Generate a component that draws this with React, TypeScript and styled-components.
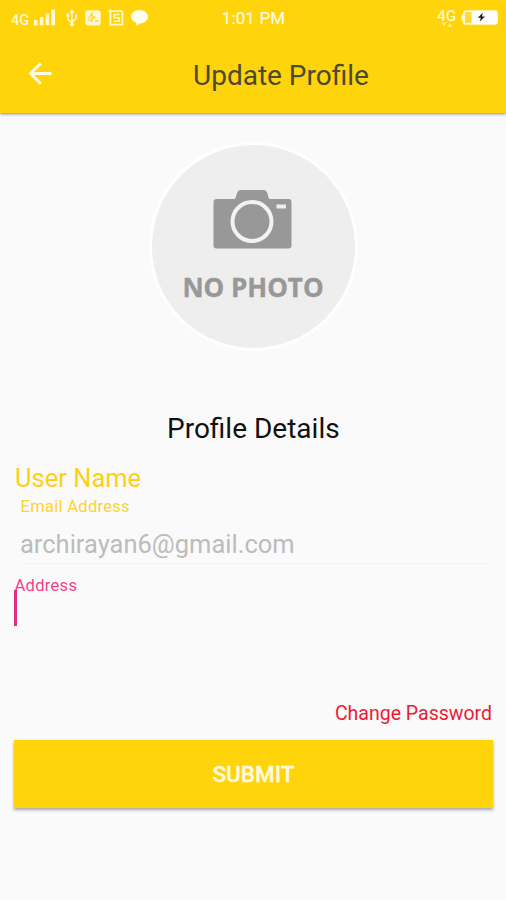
import React from "react";
import styled, { createGlobalStyle } from "styled-components";

const GlobalStyle = createGlobalStyle`
  *, *::before, *::after { box-sizing: border-box; }
  body { margin: 0; background: #fafafa; font-family: Roboto, sans-serif; }
`;

const Screen = styled.div`
  width: 506px;
  height: 900px;
  display: flex;
  flex-direction: column;
  background: #fafafa;
  overflow: hidden;
`;

const Header = styled.header`
  height: 113px;
  flex: none;
  background: #ffd40b;
  box-shadow: 0 1px 3px rgba(60, 50, 80, 0.6);
`;

const StatusBar = styled.div`
  height: 36px;
  display: grid;
  grid-template-columns: 1fr auto 1fr;
  align-items: center;
  padding: 0 7px 0 11px;
  color: #fffbe0;
`;

const StatusIcons = styled.div`
  display: flex;
  align-items: center;
`;

const StatusEnd = styled(StatusIcons)`
  justify-content: flex-end;
`;

const Clock = styled.time`
  margin-right: 3px;
  font-size: 17px;
  line-height: 20px;
  letter-spacing: 0.15px;
  -webkit-text-stroke: 0.2px #fffbe0;
`;

const Toolbar = styled.div`
  height: 77px;
  display: flex;
  align-items: flex-start;
  padding: 24px 0 0 28px;
`;

const BackButton = styled.button`
  width: 24px;
  height: 30px;
  padding: 0;
  border: 0;
  background: none;
`;

const Title = styled.h1`
  margin: 0 0 0 141px;
  font-size: 28px;
  line-height: 32px;
  font-weight: 400;
  color: #4b4a32;
`;

const Content = styled.main`
  display: flex;
  flex-direction: column;
  padding: 29px 13px 0 14px;
`;

const Avatar = styled.div`
  width: 209px;
  height: 209px;
  margin-left: 135px;
  border: 3px solid #fefefe;
  border-radius: 50%;
  background: #eeeeee;
  display: flex;
  flex-direction: column;
  align-items: center;
  padding: 44px 1px 0 0;
`;

const AvatarCaption = styled.span`
  margin-top: 20px;
  font-family: "Open Sans", sans-serif;
  font-size: 26px;
  line-height: 36px;
  font-weight: 700;
  color: #989898;
  -webkit-text-stroke: 0.4px #989898;
  white-space: nowrap;
`;

const SectionTitle = styled.h2`
  margin: 62px 0 0 153px;
  font-size: 28px;
  line-height: 32px;
  font-weight: 400;
  color: #111111;
`;

const FieldName = styled.div`
  margin: 18px 0 0 1px;
  font-size: 25.5px;
  line-height: 30px;
  color: #fdd017;
`;

const Field = styled.div<{ $inset?: number; $gap?: number }>`
  display: flex;
  flex-direction: column;
  align-items: flex-start;
  margin-top: ${(p) => p.$gap ?? 0}px;
  padding: 0 4px 0 ${(p) => p.$inset ?? 0}px;
`;

const Label = styled.label<{ $active?: boolean }>`
  padding-left: 0.5px;
  font-size: 16.5px;
  line-height: 20px;
  height: 20px;
  letter-spacing: 0.3px;
  color: ${(p) => (p.$active ? "#f0428c" : "#fdd32e")};
`;

const Value = styled.div`
  align-self: stretch;
  height: 47px;
  padding-top: 12px;
  border-bottom: 1px solid #f3f3f3;
  font-size: 25.5px;
  line-height: 30px;
  color: #bcbcbc;
`;

const Caret = styled.span`
  width: 3px;
  height: 36px;
  margin-top: -6px;
  background: #e0317f;
`;

const PasswordLink = styled.a`
  align-self: flex-end;
  margin: 76px 1px 0 0;
  font-size: 19.5px;
  line-height: 24px;
  color: #ec1c34;
`;

const Submit = styled.button`
  height: 68px;
  margin-top: 14px;
  padding: 0;
  border: 0;
  background: #ffd40b;
  box-shadow: 0 2px 3px rgba(60, 60, 90, 0.45);
  font-family: Roboto, sans-serif;
  font-size: 22.5px;
  font-weight: 500;
  color: #fffbe2;
  -webkit-text-stroke: 0.3px #fffbe2;
`;

const SignalIcon = () => (
  <svg width="46" height="24" viewBox="11 6 46 24" fill="#fff8d0">
    <text x="11" y="24.5" fontSize="14.5" fontWeight="500" fontFamily="Roboto">4G</text>
    <rect x="34" y="20" width="3.6" height="5.3" />
    <rect x="39.8" y="17" width="3.6" height="8.3" />
    <rect x="45.6" y="13.5" width="3.6" height="11.8" />
    <rect x="51.4" y="9.5" width="3.6" height="15.8" />
  </svg>
);

const NotificationIcons = () => (
  <svg width="93" height="24" viewBox="57 6 93 24" fill="none" stroke="#fff8d0" strokeWidth="1.5">
    <path d="M72 12v13M68 15v4.5l4 3 4-4V14" />
    <path d="M72 9l-2.4 4h4.8zM66.5 13.5h3v3h-3z" fill="#fff8d0" stroke="none" />
    <circle cx="72" cy="24.5" r="2" fill="#fff8d0" stroke="none" />
    <rect x="85.3" y="10.3" width="15.4" height="15.2" rx="3" fill="#fff8d0" stroke="none" />
    <path d="M89 17.5l3-4v7.5l-3-1zM92 15.5l3 2-3 2M95 21h4" stroke="#ffd84a" strokeWidth="1.4" />
    <path d="M108.5 11.2h14M110.4 9.5v15.2h12V11.5" strokeWidth="1.8" />
    <path d="M119.5 14.5h-5.2v3.2h4.8v3.5h-5.3M116.5 17.8h3.3" strokeWidth="1.6" />
    <path
      d="M139.5 10c4.8 0 8.5 2.9 8.5 6.7s-3.7 6.7-8.3 6.7c-.7 1-1.8 1.8-3.3 1.8v-2.4c-3.2-1-5.4-3.3-5.4-6.1 0-3.8 3.7-6.7 8.5-6.7z"
      fill="#fffdf0"
      stroke="none"
    />
  </svg>
);

const NetworkBatteryIcon = () => (
  <svg width="63" height="28" viewBox="436 4 63 28" fill="#fff6c4">
    <text x="437" y="20.5" fontSize="15.5" fontWeight="500" fontFamily="Roboto">4G</text>
    <path d="M441 22.5h5.5l-2.7 3.7zM447.3 26.7h5l-2.5-3.7z" opacity="0.7" />
    <path d="M461.5 14.5h2.5v6h-2.5z" />
    <rect x="463" y="10.3" width="35" height="14.4" rx="3" fill="#fff9dc" />
    <rect x="465" y="12" width="6.6" height="11" rx="1" fill="#ffd93a" />
    <rect x="472" y="11.3" width="25" height="12.4" rx="1" fill="#ffffff" />
    <path d="M482.8 12.8l-5 5h3l-1 3.8 5.2-5h-3z" fill="#1c1c1c" />
  </svg>
);

const BackIcon = () => (
  <svg width="24" height="24" viewBox="0 0 24 24" fill="none" stroke="#fffbe8" strokeWidth="3">
    <path d="M23.5 11.5H3M12.8 1.3L2.6 11.5l10.2 10.2" />
  </svg>
);

const CameraIcon = () => (
  <svg width="80" height="60" viewBox="0 0 80 60">
    <path
      d="M3.5 10H22l2.5-7Q25.5 1 28 1h22q3 0 4 2.2L56 10h19.5q3 0 3 3v43.5q0 3-3 3h-72q-3 0-3-3V13q0-3 3-3z"
      fill="#989898"
    />
    <circle cx="39" cy="32.500" r="19.500" fill="none" stroke="#f2f2f2" strokeWidth="4" />
    <rect x="63.500" y="15.500" width="9.500" height="4" fill="#eeeeee" />
  </svg>
);

export default function App() {
  return (
    <>
      <GlobalStyle />
      <Screen>
        <Header>
          <StatusBar>
            <StatusIcons>
              <SignalIcon />
              <NotificationIcons />
            </StatusIcons>
            <Clock>1:01 PM</Clock>
            <StatusEnd>
              <NetworkBatteryIcon />
            </StatusEnd>
          </StatusBar>
          <Toolbar>
            <BackButton aria-label="Back">
              <BackIcon />
            </BackButton>
            <Title>Update Profile</Title>
          </Toolbar>
        </Header>
        <Content>
          <Avatar>
            <CameraIcon />
            <AvatarCaption>NO PHOTO</AvatarCaption>
          </Avatar>
          <SectionTitle>Profile Details</SectionTitle>
          <FieldName>User Name</FieldName>
          <Field $inset={6} $gap={4}>
            <Label>Email Address</Label>
            <Value>archirayan6@gmail.com</Value>
          </Field>
          <Field $gap={12}>
            <Label $active>Address</Label>
            <Caret />
          </Field>
          <PasswordLink>Change Password</PasswordLink>
          <Submit>SUBMIT</Submit>
        </Content>
      </Screen>
    </>
  );
}
